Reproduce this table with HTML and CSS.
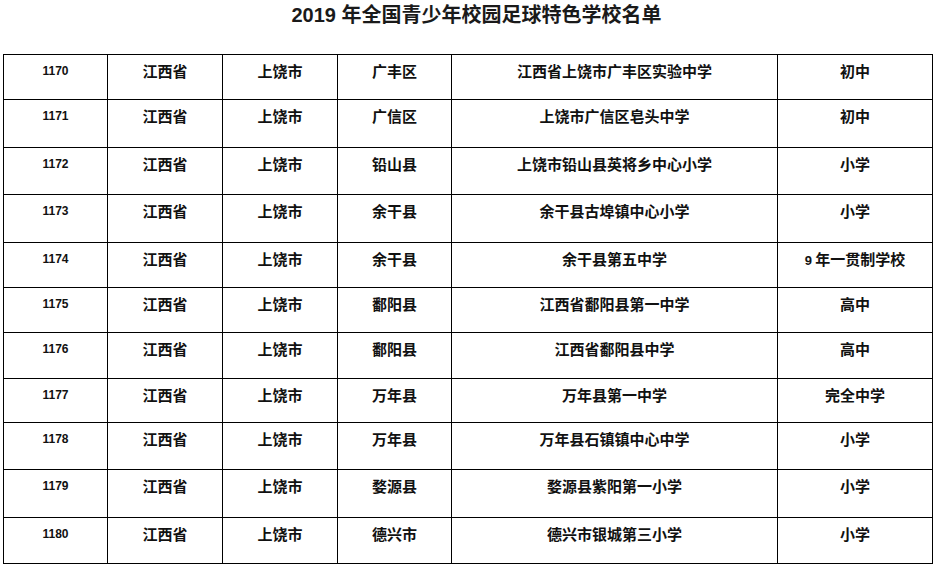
FILE: index.html
```html
<!DOCTYPE html>
<html lang="zh-CN">
<head>
<meta charset="utf-8">
<title>2019 年全国青少年校园足球特色学校名单</title>
<link rel="stylesheet" href="styles.css">
</head>
<body>
<h1 class="title">2019 年全国青少年校园足球特色学校名单</h1>
<table class="list">
<colgroup>
<col class="c-no"><col class="c-prov"><col class="c-city"><col class="c-dist"><col class="c-name"><col class="c-type">
</colgroup>
<tbody>
<tr class="r45"><td class="no">1170</td><td>江西省</td><td>上饶市</td><td>广丰区</td><td>江西省上饶市广丰区实验中学</td><td>初中</td></tr>
<tr class="r48"><td class="no">1171</td><td>江西省</td><td>上饶市</td><td>广信区</td><td>上饶市广信区皂头中学</td><td>初中</td></tr>
<tr class="r47"><td class="no">1172</td><td>江西省</td><td>上饶市</td><td>铅山县</td><td>上饶市铅山县英将乡中心小学</td><td>小学</td></tr>
<tr class="r48"><td class="no">1173</td><td>江西省</td><td>上饶市</td><td>余干县</td><td>余干县古埠镇中心小学</td><td>小学</td></tr>
<tr class="r45"><td class="no">1174</td><td>江西省</td><td>上饶市</td><td>余干县</td><td>余干县第五中学</td><td><span class="digit">9</span> 年一贯制学校</td></tr>
<tr class="r45"><td class="no">1175</td><td>江西省</td><td>上饶市</td><td>鄱阳县</td><td>江西省鄱阳县第一中学</td><td>高中</td></tr>
<tr class="r46"><td class="no">1176</td><td>江西省</td><td>上饶市</td><td>鄱阳县</td><td>江西省鄱阳县中学</td><td>高中</td></tr>
<tr class="r44"><td class="no">1177</td><td>江西省</td><td>上饶市</td><td>万年县</td><td>万年县第一中学</td><td>完全中学</td></tr>
<tr class="r47"><td class="no">1178</td><td>江西省</td><td>上饶市</td><td>万年县</td><td>万年县石镇镇中心中学</td><td>小学</td></tr>
<tr class="r48"><td class="no">1179</td><td>江西省</td><td>上饶市</td><td>婺源县</td><td>婺源县紫阳第一小学</td><td>小学</td></tr>
<tr class="r46"><td class="no">1180</td><td>江西省</td><td>上饶市</td><td>德兴市</td><td>德兴市银城第三小学</td><td>小学</td></tr>
</tbody>
</table>
</body>
</html>
```

FILE: styles.css
```css
html, body {
  margin: 0;
  padding: 0;
  background: #fff;
}
body {
  padding: 0 3px 0 3px;
  font-family: "Liberation Sans", "Noto Sans CJK SC", sans-serif;
  color: #111;
}
.title {
  margin: 0;
  padding-left: 18px;
  height: 54px;
  line-height: 30px;
  font-size: 20px;
  font-weight: bold;
  text-align: center;
  font-family: "Liberation Sans", "Noto Sans CJK SC", sans-serif;
  color: #1a1a1a;
}
.list {
  border-collapse: collapse;
  table-layout: fixed;
  width: 929px;
}
.c-no { width: 104px; }
.c-prov { width: 115px; }
.c-city { width: 115px; }
.c-dist { width: 114px; }
.c-name { width: 326px; }
.c-type { width: 155px; }
.list td {
  border: 1px solid #000;
  height: 46px;
  padding: 6px 2px 0 2px;
  box-sizing: border-box;
  vertical-align: top;
  text-align: center;
  font-family: "Noto Sans CJK SC", sans-serif;
  font-size: 15px;
  font-weight: bold;
  line-height: 20px;
  color: #111;
  white-space: nowrap;
}
.r44 td { height: 44px; }
.r45 td { height: 45px; }
.r46 td { height: 46px; }
.r47 td { height: 47px; }
.r48 td { height: 48px; }
.list td.no {
  font-family: "Liberation Sans", sans-serif;
  font-size: 12px;
  font-weight: bold;
  padding-top: 6px;
}
.digit {
  font-family: "Liberation Sans", sans-serif;
  font-size: 13px;
}
```
